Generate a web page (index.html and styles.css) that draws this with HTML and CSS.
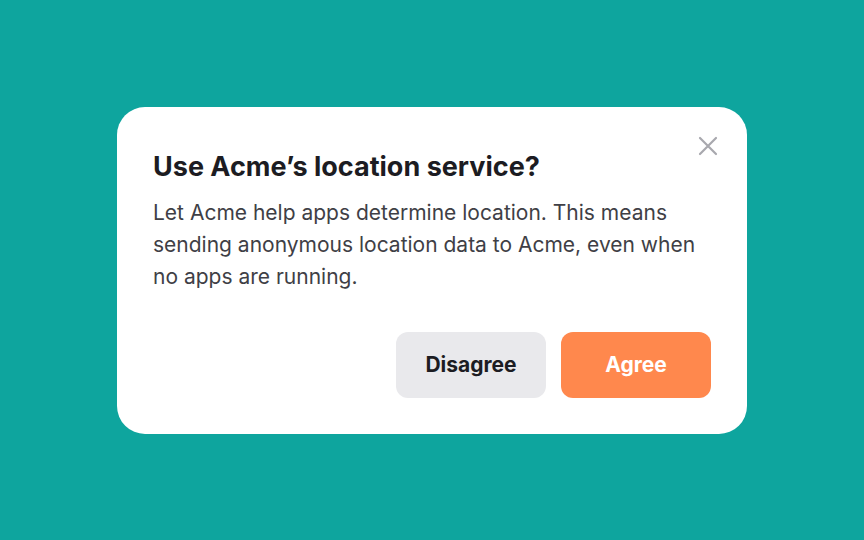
FILE: index.html
```html
<!DOCTYPE html>
<html lang="en">
<head>
<meta charset="utf-8">
<link rel="stylesheet" href="styles.css">
</head>
<body>
<div class="stage">
  <div class="dialog" role="dialog">
    <button class="close" aria-label="Close">
      <svg width="20" height="20" viewBox="0 0 20 20"><path d="M2 2L18 18M18 2L2 18" stroke="#a8a8ae" stroke-width="2.2" stroke-linecap="round"/></svg>
    </button>
    <h1 class="title">Use Acme’s location service?</h1>
    <p class="text">Let Acme help apps determine location. This means sending anonymous location data to Acme, even when no apps are running.</p>
    <div class="actions">
      <button class="btn btn-secondary">Disagree</button>
      <button class="btn btn-primary">Agree</button>
    </div>
  </div>
</div>
</body>
</html>
```
FILE: styles.css
```css
html, body { margin: 0; padding: 0; }
body {
  background: #0ea59e;
  font-family: Inter, "Noto Sans", sans-serif;
}
.stage {
  width: 864px;
  height: 540px;
  display: flex;
  align-items: center;
  justify-content: center;
}
.dialog {
  position: relative;
  box-sizing: border-box;
  width: 630px;
  height: 327px;
  background: #ffffff;
  border-radius: 28px;
  padding: 44px 36px 36px 36px;
  display: flex;
  flex-direction: column;
}
.close {
  position: absolute;
  top: 29px;
  right: 29px;
  width: 20px;
  height: 20px;
  padding: 0;
  border: 0;
  background: none;
}
.close svg { display: block; }
.title {
  margin: 0;
  font-size: 27px;
  line-height: 32px;
  font-weight: 700;
  color: #1c1c22;
}
.text {
  margin: 14px 0 0 0;
  font-size: 21px;
  line-height: 32px;
  color: #3f3f46;
}
.actions {
  margin-top: auto;
  display: flex;
  justify-content: flex-end;
  gap: 15px;
}
.btn {
  width: 150px;
  height: 66px;
  border: 0;
  border-radius: 12px;
  font-family: Inter, "Noto Sans", sans-serif;
  font-size: 21px;
  font-weight: 700;
}
.btn-secondary { background: #e9e9ec; color: #1c1c22; }
.btn-primary { background: #ff884d; color: #ffffff; }
```
